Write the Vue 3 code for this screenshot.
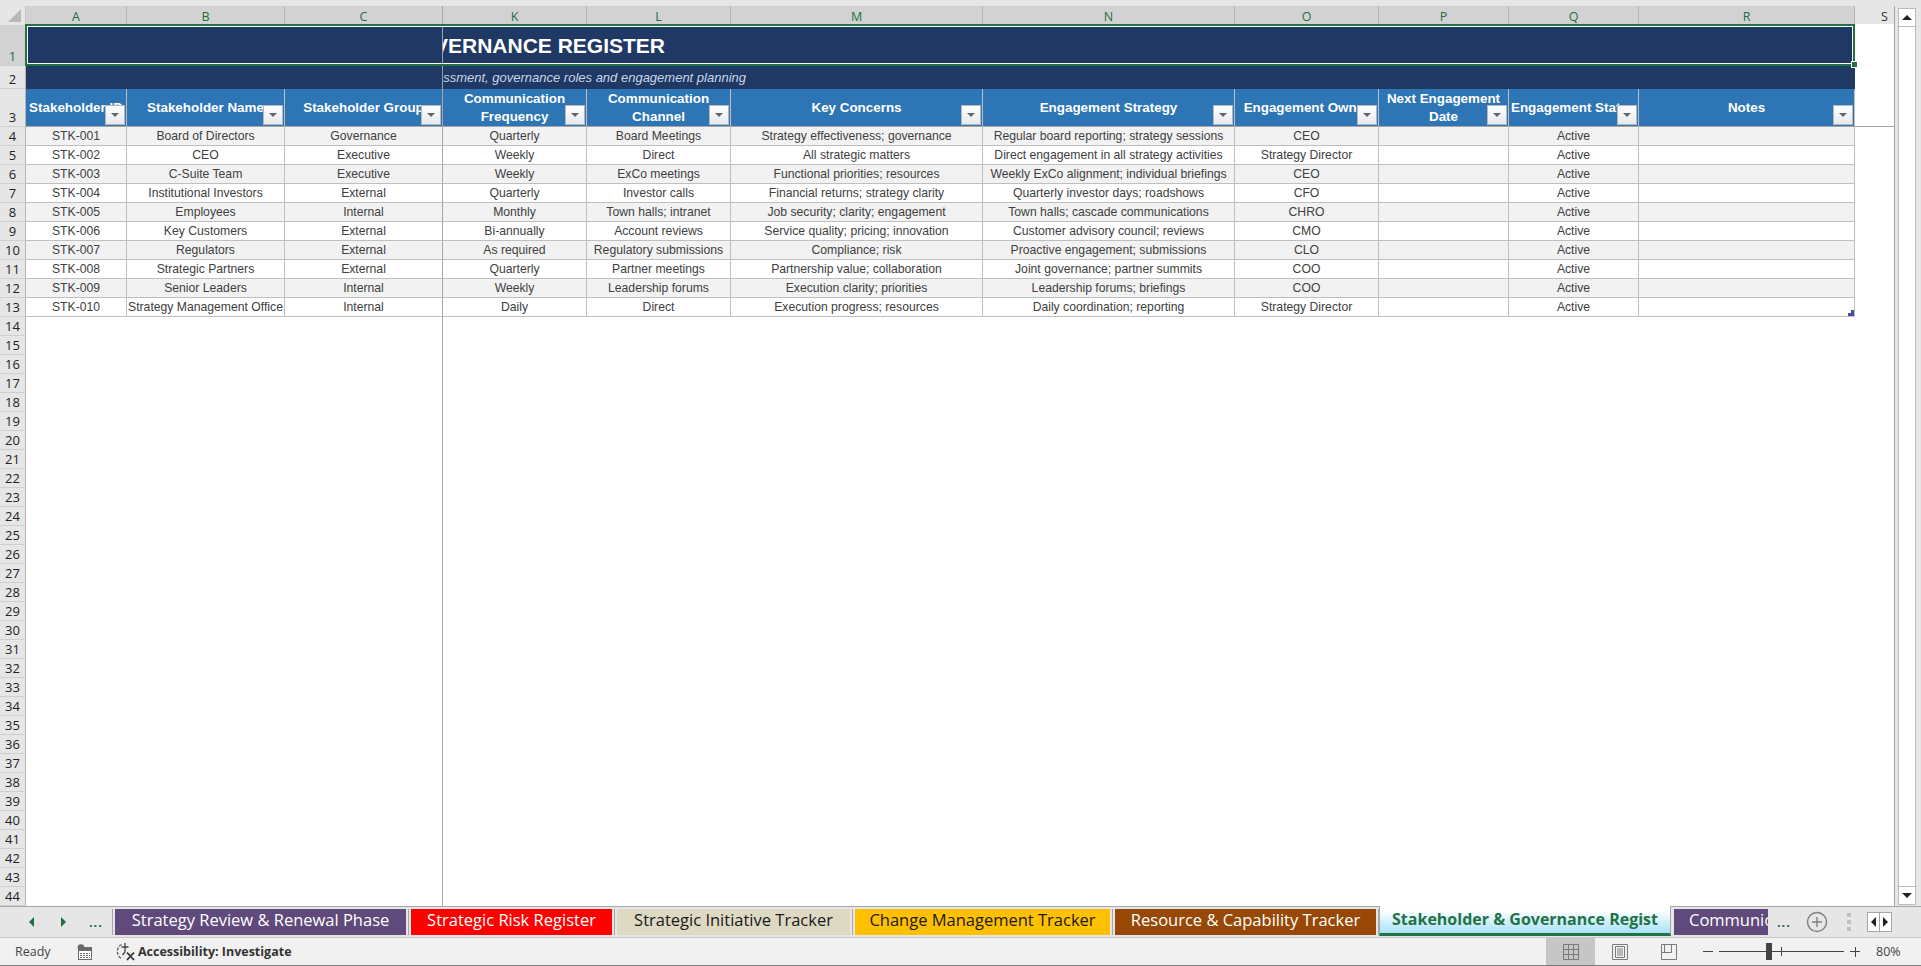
<script setup>
const cols = ['A', 'B', 'C', 'K', 'L', 'M', 'N', 'O', 'P', 'Q', 'R'];
const headers = [
  ['Stakeholder ID'], ['Stakeholder Name'], ['Stakeholder Group'],
  ['Communication', 'Frequency'], ['Communication', 'Channel'],
  ['Key Concerns'], ['Engagement Strategy'], ['Engagement Owner'],
  ['Next Engagement', 'Date'], ['Engagement Status'], ['Notes'],
];
const rows = [
  ['STK-001', 'Board of Directors', 'Governance', 'Quarterly', 'Board Meetings', 'Strategy effectiveness; governance', 'Regular board reporting; strategy sessions', 'CEO', '', 'Active', ''],
  ['STK-002', 'CEO', 'Executive', 'Weekly', 'Direct', 'All strategic matters', 'Direct engagement in all strategy activities', 'Strategy Director', '', 'Active', ''],
  ['STK-003', 'C-Suite Team', 'Executive', 'Weekly', 'ExCo meetings', 'Functional priorities; resources', 'Weekly ExCo alignment; individual briefings', 'CEO', '', 'Active', ''],
  ['STK-004', 'Institutional Investors', 'External', 'Quarterly', 'Investor calls', 'Financial returns; strategy clarity', 'Quarterly investor days; roadshows', 'CFO', '', 'Active', ''],
  ['STK-005', 'Employees', 'Internal', 'Monthly', 'Town halls; intranet', 'Job security; clarity; engagement', 'Town halls; cascade communications', 'CHRO', '', 'Active', ''],
  ['STK-006', 'Key Customers', 'External', 'Bi-annually', 'Account reviews', 'Service quality; pricing; innovation', 'Customer advisory council; reviews', 'CMO', '', 'Active', ''],
  ['STK-007', 'Regulators', 'External', 'As required', 'Regulatory submissions', 'Compliance; risk', 'Proactive engagement; submissions', 'CLO', '', 'Active', ''],
  ['STK-008', 'Strategic Partners', 'External', 'Quarterly', 'Partner meetings', 'Partnership value; collaboration', 'Joint governance; partner summits', 'COO', '', 'Active', ''],
  ['STK-009', 'Senior Leaders', 'Internal', 'Weekly', 'Leadership forums', 'Execution clarity; priorities', 'Leadership forums; briefings', 'COO', '', 'Active', ''],
  ['STK-010', 'Strategy Management Office', 'Internal', 'Daily', 'Direct', 'Execution progress; resources', 'Daily coordination; reporting', 'Strategy Director', '', 'Active', ''],
];
const blankRows = Array.from({ length: 31 }, (_, i) => i + 14);
const tabs = [
  { name: 'Strategy Review & Renewal Phase', cls: 'purple', w: 291 },
  { name: 'Strategic Risk Register', cls: 'red', w: 201 },
  { name: 'Strategic Initiative Tracker', cls: 'tan', w: 233 },
  { name: 'Change Management Tracker', cls: 'amber', w: 255 },
  { name: 'Resource & Capability Tracker', cls: 'brown', w: 261 },
];
</script>

<template>
  <div class="app">
    <div class="topband"></div>
    <div class="main">
      <div class="sheet">
        <div class="corner"><span class="tri"></span></div>
        <div v-for="(c, i) in cols" :key="c" class="colhead" :class="{ split: i === 2 }">{{ c }}</div>
        <div class="colhead plain">S</div>

        <div class="rowhead sel">1</div>
        <div class="title">
          <div class="frozen"></div>
          <div class="titletext"><span>VERNANCE REGISTER</span></div>
          <span class="handle"></span>
        </div>
        <div class="side"></div>

        <div class="rowhead">2</div>
        <div class="subtitle">
          <div class="frozen"></div>
          <div class="subtext"><span>ssment, governance roles and engagement planning</span></div>
        </div>
        <div class="side"></div>

        <div class="rowhead">3</div>
        <div v-for="(h, i) in headers" :key="'h' + i" class="th" :class="{ split: i === 2 }">
          <span class="thtext"><span v-for="l in h" :key="l" class="line">{{ l }}</span></span>
          <span class="filter"><span class="arrow"></span></span>
        </div>
        <div class="side under"></div>

        <template v-for="(r, ri) in rows" :key="ri">
          <div class="rowhead">{{ ri + 4 }}</div>
          <div
            v-for="(v, ci) in r"
            :key="ci"
            class="td"
            :class="{ alt: ri % 2 === 0, split: ci === 2 }"
          >
            <span class="tdtext">{{ v }}</span>
            <span v-if="ri === 9 && ci === 10" class="resize"></span>
          </div>
          <div class="side"></div>
        </template>

        <template v-for="n in blankRows" :key="n">
          <div class="rowhead">{{ n }}</div>
          <div class="blankleft"></div>
          <div class="blankright"></div>
        </template>
      </div>

      <div class="scrollbar">
        <div class="sbtn"><span class="up"></span></div>
        <div class="strack"></div>
        <div class="sbtn"><span class="down"></span></div>
      </div>
    </div>

    <div class="tabbar">
      <div class="tabnav">
        <span class="navl"></span>
        <span class="navr"></span>
        <span class="dots">...</span>
      </div>
      <div class="tabs">
        <template v-for="t in tabs" :key="t.name">
          <div class="tab" :class="t.cls" :style="{ width: t.w + 'px' }"><span class="tabtext">{{ t.name }}</span></div>
          <span class="sep"></span>
        </template>
        <div class="tab active"><span class="tabtext">Stakeholder &amp; Governance Regist</span></div>
        <span class="sep clear"></span>
        <div class="tab purple cut"><span class="tabtext">Communic</span></div>
      </div>
      <div class="tabend">
        <span class="dots">...</span>
        <svg class="plus" width="22" height="22" viewBox="0 0 22 22">
          <circle cx="11" cy="11" r="9.5" fill="none" stroke="#7f7f7f" stroke-width="1.4" />
          <path d="M11 6v10M6 11h10" stroke="#7f7f7f" stroke-width="1.4" />
        </svg>
        <span class="vdots"><i></i><i></i><i></i></span>
        <span class="navbox">
          <span class="boxl"></span>
          <span class="boxr"></span>
        </span>
      </div>
    </div>

    <div class="status">
      <span class="ready">Ready</span>
      <svg class="macro" width="16" height="16" viewBox="0 0 16 16">
        <rect x="2.5" y="3.5" width="13" height="12" fill="#fff" stroke="#6a6a6a" />
        <rect x="2" y="3" width="14" height="4" fill="#6a6a6a" />
        <circle cx="5" cy="3.6" r="3.4" fill="#6a6a6a" />
        <path d="M4 9.5h10M4 11.5h10M4 13.5h10" stroke="#6a6a6a" stroke-dasharray="2 1" />
      </svg>
      <svg class="acc" width="20" height="20" viewBox="0 0 20 20">
        <path d="M5.5 2.5A8 8 0 0 0 5.500 16.500" fill="none" stroke="#5a5a5a" stroke-width="1.3" stroke-dasharray="3 1.4" />
        <path d="M9 1v5M5.5 5h7M9 6v4M9 10l-2.5 3" fill="none" stroke="#444" stroke-width="1.3" />
        <path d="M11 10.500l7 7.500M18 10.500l-7 7.500" stroke="#333" stroke-width="1.8" />
      </svg>
      <span class="accesstext">Accessibility: Investigate</span>
      <div class="grow"></div>
      <div class="view on">
        <svg width="16" height="16" viewBox="0 0 16 16"><path d="M.5.5h15v15H.5zM5.5.5v15M10.5.5v15M.5 5.500h15M.5 10.500h15" fill="none" stroke="#7a7a7a" /></svg>
      </div>
      <div class="view">
        <svg width="16" height="16" viewBox="0 0 16 16"><path d="M.5.5h15v15H.5z" fill="none" stroke="#7a7a7a" /><path d="M3.500 2.500h9v11h-9zM5 5h6M5 7h6M5 9h6M5 11h6" fill="none" stroke="#7a7a7a" /></svg>
      </div>
      <div class="view">
        <svg width="16" height="16" viewBox="0 0 16 16"><path d="M.5.5h15v15H.5zM.5 8.500h10v-8M3.500.5v8" fill="none" stroke="#7a7a7a" /></svg>
      </div>
      <div class="zoom">
        <span class="minus"></span>
        <span class="slider"><i class="tick"></i><i class="thumb"></i></span>
        <span class="zplus"></span>
      </div>
      <span class="pct">80%</span>
    </div>
  </div>
</template>

<style scoped>
.app {
  width: 1921px;
  height: 966px;
  display: flex;
  flex-direction: column;
  overflow: hidden;
  background: #e6e6e6;
  font-family: "Liberation Sans", Arial, sans-serif;
}
.topband { height: 6px; background: #e6e6e6; }
.main { display: flex; height: 900px; }
.sheet {
  display: grid;
  grid-template-columns: 26px 101px 158px 158px 144px 144px 252px 252px 144px 130px 130px 216px 39px;
  grid-template-rows: 19px 41px 23px 38px repeat(41, 19px);
  width: 1894px;
  height: 900px;
  background: #fff;
  border-right: 1px solid #a6a6a6;
  box-sizing: content-box;
}
.corner {
  background: #e6e6e6;
  position: relative;
  border-right: 1px solid #c8c8c8;
}
.tri {
  position: absolute;
  right: 4px;
  bottom: 3px;
  width: 0;
  height: 0;
  border-left: 13px solid transparent;
  border-bottom: 13px solid #b8b8b8;
}
.colhead {
  background: #d2d2d2;
  color: #1d6f42;
  font: 12.5px "Open Sans", sans-serif;
  display: flex;
  align-items: center;
  justify-content: center;
  border-right: 1px solid #b5b5b5;
  box-sizing: border-box;
  height: 18px;
  padding-top: 3px;
}
.colhead.plain { background: #e6e6e6; color: #333; border-right: 0; padding-left: 20px; }
.rowhead {
  background: #e6e6e6;
  color: #222;
  font: 13px "Open Sans", sans-serif;
  display: flex;
  align-items: flex-end;
  justify-content: center;
  border-right: 1px solid #b5b5b5;
  border-bottom: 1px solid #cfcfcf;
  box-sizing: border-box;
  line-height: 18px;
}
.rowhead.sel { background: #d2d2d2; color: #1d6f42; }
.title {
  grid-column: 2 / span 11;
  background: #1f3864;
  display: flex;
  position: relative;
}
.frozen {
  width: 417px;
  flex: none;
  border-right: 1px solid #9aa3b3;
  box-sizing: border-box;
}
.title::after {
  content: "";
  position: absolute;
  inset: -1px 0 0 -1px;
  border: 2px solid #217346;
  outline: 1px solid #fff;
  outline-offset: -3px;
  pointer-events: none;
}
.handle {
  position: absolute;
  right: -3px;
  bottom: -2px;
  width: 5px;
  height: 5px;
  background: #217346;
  border: 1px solid #fff;
  z-index: 2;
}
.titletext {
  width: 222px;
  overflow: hidden;
  display: flex;
  justify-content: flex-end;
  align-items: center;
  white-space: nowrap;
  color: #fff;
  font-weight: 700;
  font-size: 21px;
}
.subtitle {
  grid-column: 2 / span 11;
  background: #1f3864;
  display: flex;
}
.subtext {
  width: 303px;
  overflow: hidden;
  display: flex;
  justify-content: flex-end;
  align-items: center;
  white-space: nowrap;
  color: #c9d6e8;
  font-style: italic;
  font-size: 13px;
}
.side { background: #fff; }
.side.under { border-bottom: 1px solid #a6a6a6; }
.th {
  background: #2e75b6;
  color: #fff;
  font-weight: 700;
  font-size: 13.4px;
  position: relative;
  overflow: hidden;
  display: flex;
  align-items: center;
  justify-content: center;
  text-align: center;
  border-right: 1px solid #bfbfbf;
  border-bottom: 1px solid #a6a6a6;
  box-sizing: border-box;
  white-space: nowrap;
}
.thtext { display: flex; flex-direction: column; align-items: center; }
.line { line-height: 18px; display: block; }
.filter {
  position: absolute;
  right: 1px;
  bottom: 1px;
  width: 20px;
  height: 20px;
  box-sizing: border-box;
  border: 1px solid #b8b8b8;
  background: linear-gradient(#ffffff, #e6e8ee);
  display: flex;
  align-items: center;
  justify-content: center;
}
.arrow {
  width: 0;
  height: 0;
  border-left: 4px solid transparent;
  border-right: 4px solid transparent;
  border-top: 4px solid #666;
}
.td {
  font-size: 12.2px;
  color: #404040;
  display: flex;
  align-items: center;
  justify-content: center;
  border-right: 1px solid #bfbfbf;
  border-bottom: 1px solid #bfbfbf;
  box-sizing: border-box;
  white-space: nowrap;
  overflow: hidden;
  position: relative;
  background: #fff;
}
.td.alt { background: #f2f2f2; }
.split { border-right-color: #a6a6a6 !important; }
.resize {
  position: absolute;
  right: 0;
  bottom: 0;
  width: 6px;
  height: 6px;
  background: #3f4fa8;
  clip-path: polygon(100% 0, 100% 100%, 0 100%, 0 50%, 50% 50%, 50% 0);
}
.blankleft {
  grid-column: 2 / span 3;
  border-right: 1px solid #a6a6a6;
}
.blankright { grid-column: 5 / span 9; }

.scrollbar {
  width: 18px;
  margin: 2px 5px 0 3px;
  display: flex;
  flex-direction: column;
  background: #fff;
  border-left: 1px solid #bbb;
  border-right: 1px solid #bbb;
  box-sizing: border-box;
  height: 897px;
}
.sbtn {
  height: 19px;
  background: #fff;
  border: 1px solid #bbb;
  margin: 0 -1px;
  flex: none;
  display: flex;
  align-items: center;
  justify-content: center;
  box-sizing: border-box;
}
.strack { flex: 1; }
.up { width: 0; height: 0; border-left: 5px solid transparent; border-right: 5px solid transparent; border-bottom: 5px solid #222; }
.down { width: 0; height: 0; border-left: 5px solid transparent; border-right: 5px solid transparent; border-top: 5px solid #222; }

.tabbar {
  height: 32px;
  background: #e6e6e6;
  border-top: 1px solid #a6a6a6;
  border-bottom: 1px solid #c8c8c8;
  box-sizing: border-box;
  display: flex;
  align-items: flex-start;
  position: relative;
}
.tabnav {
  width: 113px;
  flex: none;
  height: 26px;
  margin-top: 2px;
  display: flex;
  align-items: center;
  padding-left: 29px;
  box-sizing: border-box;
  border-right: 1px solid #a6a6a6;
  margin-right: 2px;
}
.navl, .navr { width: 0; height: 0; border-top: 5px solid transparent; border-bottom: 5px solid transparent; }
.navl { border-right: 5px solid #1d6f42; }
.navr { border-left: 5px solid #1d6f42; margin-left: 27px; }
.dots { color: #1d6f42; font: 700 13px "Liberation Sans", sans-serif; letter-spacing: 1px; }
.tabnav .dots { margin-left: 23px; }
.tabs { display: flex; margin-top: 2px; flex: none; }
.sep {
  width: 5px;
  height: 26px;
  flex: none;
  background: linear-gradient(#a6a6a6, #a6a6a6) center / 1px 100% no-repeat;
}
.sep.clear { background: none; }
.tab {
  height: 26px;
  box-sizing: border-box;
  font: 16.5px "Open Sans", sans-serif;
  display: flex;
  align-items: center;
  justify-content: center;
  white-space: nowrap;
  overflow: hidden;
  flex: none;
  color: #fff;
  padding-bottom: 6px;
}
.purple { background: #604a7b; }
.red { background: #ff0000; }
.tan { background: #ddd9c3; color: #1a1a1a; }
.amber { background: #ffc000; color: #1a1a1a; }
.brown { background: #974806; }
.active {
  width: 292px;
  margin: -3px -2px 0 -2px;
  height: 30px;
  padding: 0 0 2px;
  color: #217346;
  font-weight: 700;
  font-size: 16px;
  background: linear-gradient(#ffffff 15%, #a9e2f7);
  border: 1px solid #a6a6a6;
  border-top: 0;
  border-bottom: 3px solid #217346;
}
.cut {
  width: 94px;
  justify-content: flex-start;
  padding-left: 15px;
}
.tabend {
  position: absolute;
  left: 1768px;
  top: 0;
  right: 0;
  height: 30px;
  display: flex;
  align-items: center;
}
.tabend .dots { margin-left: 9px; }
.plus { margin-left: 15px; }
.vdots { display: flex; flex-direction: column; gap: 3px; margin-left: 19px; }
.vdots i { width: 4px; height: 4px; background: #c0c0c0; display: block; }
.navbox {
  margin-left: 16px;
  width: 25px;
  height: 20px;
  border: 1px solid #a6a6a6;
  background: #fff;
  display: flex;
  box-sizing: border-box;
}
.boxl, .boxr { flex: 1; display: flex; align-items: center; justify-content: center; position: relative; }
.boxl { border-right: 1px solid #a6a6a6; }
.boxl::before { content: ""; border-top: 5px solid transparent; border-bottom: 5px solid transparent; border-right: 5px solid #222; }
.boxr::before { content: ""; border-top: 5px solid transparent; border-bottom: 5px solid transparent; border-left: 5px solid #222; }

.status {
  height: 28px;
  background: #f1f1f1;
  display: flex;
  align-items: center;
  border-bottom: 1px solid #7a7a7a;
  box-sizing: border-box;
  color: #444;
  font: 12.5px "Open Sans", sans-serif;
}
.ready { margin-left: 15px; width: 60px; margin-top: -1px; }
.macro { flex: none; margin-left: 1px; }
.acc { margin-left: 24px; flex: none; }
.accesstext { margin-left: 2px; font-weight: 700; color: #333; margin-top: -1px; }
.grow { flex: 1; }
.view {
  width: 49px;
  height: 27px;
  display: flex;
  align-items: center;
  justify-content: center;
}
.view.on { background: #c6c6c6; }
.zoom { display: flex; align-items: center; margin-left: 10px; }
.minus { width: 10px; height: 1px; background: #444; }
.slider { width: 125px; height: 1px; background: #444; margin: 0 6px; position: relative; display: block; }
.thumb { position: absolute; left: 47px; top: -8px; width: 6px; height: 17px; background: #444; }
.tick { position: absolute; left: 62px; top: -4px; width: 1px; height: 9px; background: #444; }
.zplus { width: 10px; height: 10px; position: relative; background:
  linear-gradient(#444, #444) center / 100% 1px no-repeat,
  linear-gradient(#444, #444) center / 1px 100% no-repeat; }
.pct { margin-left: 16px; width: 45px; }
</style>
